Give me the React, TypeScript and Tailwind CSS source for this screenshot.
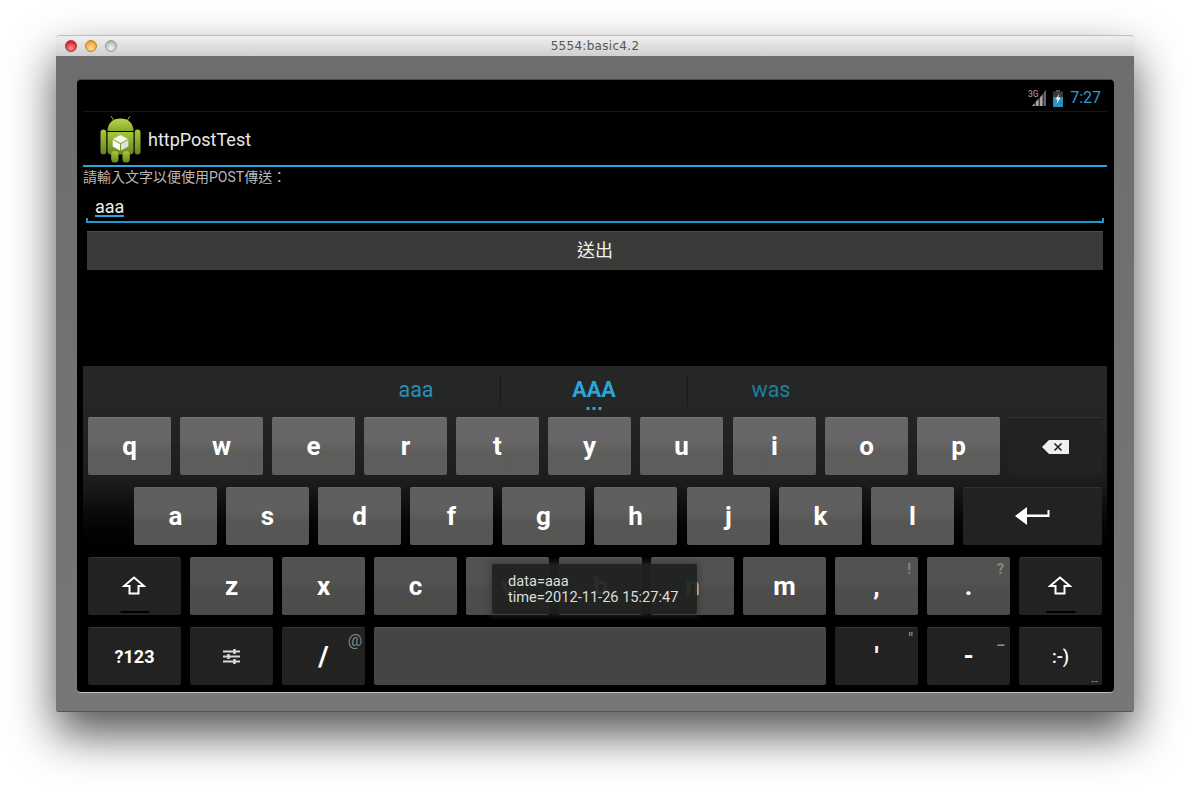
import React from "react";

const roboto = "font-['Roboto','Liberation_Sans',sans-serif]";

const tones = {
  r1: "bg-linear-to-b from-[#686668] from-40% to-[#5d5e5c] to-60% border-t border-[#757575]",
  r2: "bg-linear-to-b from-[#5f5f5f] from-40% to-[#565755] to-60% border-t border-[#686868]",
  r3: "bg-linear-to-b from-[#525350] from-40% to-[#4c4c4b] to-60% border-t border-[#5a5a58]",
  space: "bg-[#444644] border-t border-[#555]",
  dark: "bg-[#222222] border-t border-[#333333]",
};

function Key({
  label, tone, w = "w-[83px]", gap = false, hint, size = "text-[26px]", weight = "font-bold", children,
}: {
  label?: string; tone: keyof typeof tones; w?: string; gap?: boolean; hint?: React.ReactNode;
  size?: string; weight?: string; children?: React.ReactNode;
}) {
  return (
    <div className={`relative h-[58px] rounded-[2px] shrink-0 flex items-center justify-center text-white ${w} ${tones[tone]} ${gap ? "ml-px" : ""} ${size} ${weight}`}>
      {label}
      {children}
      {hint}
    </div>
  );
}

function Shift() {
  return (
    <>
      <svg width="24" height="19" viewBox="0 0 24 19" fill="none" className="-mt-[2px] -ml-[1px]">
        <path d="M12 1.5 L22 10 H16.5 V17.5 H7.5 V10 H2 Z" stroke="#fff" strokeWidth="2" strokeLinejoin="miter" />
      </svg>
      <div className="absolute bottom-[2px] left-1/2 -translate-x-1/2 w-[29px] h-[2px] bg-black" />
    </>
  );
}

function Android() {
  return (
    <svg width="41" height="48" viewBox="0 0 41 48" className="shrink-0">
      <defs>
        <linearGradient id="g" x1="0" y1="0" x2="0" y2="1">
          <stop offset="0" stopColor="#a9c83e" />
          <stop offset="1" stopColor="#67851c" />
        </linearGradient>
        <linearGradient id="h" x1="0" y1="0" x2="0" y2="1">
          <stop offset="0" stopColor="#b6d64c" />
          <stop offset="1" stopColor="#8aa92c" />
        </linearGradient>
      </defs>
      <path d="M11 1 L13.5 5 M30 1 L27.5 5" stroke="#8fae30" strokeWidth="1" />
      <path d="M7.5 16 C7.5 8 13 3.5 20.5 3.5 C28 3.5 33.5 8 33.5 16 Z" fill="url(#h)" />
      <path d="M7.5 17 H33.5 V36 Q33.5 39.5 30 39.5 H11 Q7.5 39.5 7.5 36 Z" fill="url(#g)" />
      <rect x="0.5" y="14.5" width="5.8" height="25" rx="2.9" fill="url(#g)" />
      <rect x="34.7" y="14.5" width="5.8" height="25" rx="2.9" fill="url(#g)" />
      <rect x="11.2" y="36" width="7.3" height="11.5" rx="3.6" fill="url(#g)" />
      <rect x="22.5" y="36" width="7.3" height="11.5" rx="3.6" fill="url(#g)" />
      <path d="M20.5 20 L28 24 L20.5 28 L13 24 Z" fill="#f6f6f2" />
      <path d="M12.7 25 L20 29 V35.5 L12.7 31.5 Z" fill="#fff" />
      <path d="M28.3 25 L21 29 V35.5 L28.3 31.5 Z" fill="#dfe2d8" />
    </svg>
  );
}

function Hint({ children, className }: { children: React.ReactNode; className: string }) {
  return <span className={`absolute text-[#858585] leading-none ${className}`}>{children}</span>;
}

export default function App() {
  const r1 = ["q", "w", "e", "r", "t", "y", "u", "i", "o", "p"];
  const r2 = ["a", "s", "d", "f", "g", "h", "j", "k", "l"];
  const r3 = ["z", "x", "c", "v", "b", "n", "m"];
  return (
    <div className={`w-[1190px] h-[790px] bg-white pl-[56px] pt-[35px] overflow-hidden ${roboto}`}>
      <div className="w-[1078px] h-[677px] rounded-t-[4px] rounded-b-[2px] flex flex-col shadow-[0_22px_46px_rgba(0,0,0,0.68)] border-b border-[#555]">
        <div className="h-[21px] shrink-0 rounded-t-[4px] border-t border-[#bdbdbd] bg-linear-to-b from-[#f0f0f0] to-[#cfcfcf] flex items-center px-[9px] relative">
          <div className="flex gap-[8px]">
            <div className="w-[12px] h-[12px] rounded-full border border-[#a33] bg-[radial-gradient(circle_at_50%_70%,#ff9a9a,#e5262a_65%,#b81c1c)]" />
            <div className="w-[12px] h-[12px] rounded-full border border-[#b8862f] bg-[radial-gradient(circle_at_50%_70%,#ffe0a0,#f3a63a_65%,#c98820)]" />
            <div className="w-[12px] h-[12px] rounded-full border border-[#999] bg-[radial-gradient(circle_at_50%_70%,#f4f4f4,#bdbdbd_65%,#a0a0a0)]" />
          </div>
          <div className="absolute left-0 right-0 top-[2px] text-center text-[12px] leading-[16px] tracking-[0.3px] text-[#555] font-['DejaVu_Sans',sans-serif]">5554:basic4.2</div>
        </div>
        <div className="flex-1 bg-linear-to-b from-[#6d6d6d] to-[#777777] pt-[24px] pl-[21px]">
          <div className="relative w-[1037px] h-[613px] bg-black rounded-[4px] pl-[6px] pr-[7px] flex flex-col border-b border-[#c4c4c4] shadow-[0_-1px_0_#4a4a4a]">
            <div className="h-[32px] shrink-0 border-b border-[#161616] flex items-center justify-end pr-[6px] pt-[5px] gap-[7px]">
              <svg width="18" height="17" viewBox="0 0 18 17">
                <text x="0" y="7" fontSize="8.5" fontWeight="500" fill="#8c8c8c" fontFamily="Roboto, sans-serif">3G</text>
                <path d="M18 0 V16 H4 Z" fill="#3a3a3a" />
                <path d="M4 16 L6.5 13.3 V16 Z M8 16 V11.6 L10.5 9 V16 Z M12 16 V7.4 L14.5 4.7 V16 Z" fill="#a8a8a8" />
                <path d="M16 16 V2.5 L18 0 V16 Z" fill="#666" />
              </svg>
              <svg width="10" height="17" viewBox="0 0 10 17">
                <rect x="3" y="0" width="4" height="2" fill="#555" />
                <rect x="0" y="1.5" width="10" height="15.5" fill="#3a3a3a" />
                <rect x="0" y="7" width="10" height="10" fill="#2a8fc0" />
                <path d="M6.5 3.5 L2.5 9.5 H4.8 L3.5 14 L7.5 7.8 H5.2 Z" fill="#fff" />
              </svg>
              <span className="text-[16px] leading-none text-[#2a9fd6]">7:27</span>
            </div>
            <div className="h-[53px] shrink-0 border-b-2 border-[#2aa6dc] flex items-center pl-[17px] gap-[7px] box-content -mb-px">
              <Android />
              <span className="text-[18px] text-[#e8e8e8] pt-[2px]">httpPostTest</span>
            </div>
            <div className="mt-[1px] h-[20px] flex items-center text-[14px] text-[#b8b8b8] font-['Roboto','Noto_Sans_CJK_TC',sans-serif]">請輸入文字以便使用POST傳送：</div>
            <div className="mx-[3px] h-[37px] -mt-[1px] relative">
              <div className="absolute left-[9px] top-[9px] text-[18px] leading-[24px] text-[#eeeeee] border-b-2 border-[#2aa6dc] h-[22px]">aaa</div>
              <div className="absolute left-0 right-0 bottom-0 h-[5px] border-x-2 border-b-2 border-[#1e98cc]" />
            </div>
            <div className="mx-[4px] mt-[8px] h-[39px] pb-[1px] bg-[#3a3b39] border-t border-[#4c4c4a] flex items-center justify-center text-[18px] text-[#f0f0f0] font-['Roboto','Noto_Sans_CJK_TC',sans-serif]">送出</div>
            <div className="mt-auto h-[326px] shrink-0 bg-linear-to-b from-[#252726] from-10% via-[#1c1e1d] via-35% to-black to-62% pl-[5px] flex flex-col gap-[12px]">
              <div className="h-[39px] -ml-[5px] pt-[9px] flex items-center shrink-0">
                <div className="ml-[246px] pl-[3px] w-[171px] text-center text-[21.5px] text-[#2b8fb8]">aaa</div>
                <div className="w-px h-[31px] bg-[#191a19]" />
                <div className="w-[186px] text-center text-[21.5px] font-bold text-[#2aa6dc] relative">
                  AAA
                  <div className="absolute left-1/2 -translate-x-1/2 -bottom-[4px] flex gap-[3px]">
                    <div className="w-[3px] h-[3px] bg-[#2aa6dc]" />
                    <div className="w-[3px] h-[3px] bg-[#2aa6dc]" />
                    <div className="w-[3px] h-[3px] bg-[#2aa6dc]" />
                  </div>
                </div>
                <div className="w-px h-[31px] bg-[#191a19]" />
                <div className="w-[166px] text-center text-[21.5px] text-[#1f7f9f]">was</div>
              </div>
              <div className="flex gap-[9px]">
                {r1.map((k) => <Key key={k} label={k} tone="r1" gap={k === "i"} />)}
                <Key tone="dark" w="w-[93px]">
                  <svg width="28" height="14" viewBox="0 0 28 14">
                    <path d="M7 0 H27 V14 H7 L0 7 Z" fill="#f0f0f0" />
                    <path d="M12.5 3.5 L19.5 10.5 M19.5 3.5 L12.5 10.5" stroke="#222" strokeWidth="1.6" />
                  </svg>
                </Key>
              </div>
              <div className="flex gap-[9px] pl-[46px]">
                {r2.map((k) => <Key key={k} label={k} tone="r2" gap={k === "j"} />)}
                <Key tone="dark" w="w-[139px]">
                  <svg width="35" height="18" viewBox="0 0 35 18" className="-mt-[1px]">
                    <path d="M0 9 L12 0 V7.5 H32.5 V3 H34.5 V10 H12 V18 Z" fill="#fff" />
                  </svg>
                </Key>
              </div>
              <div className="flex gap-[9px]">
                <Key tone="dark" w="w-[93px]"><Shift /></Key>
                {r3.map((k) => <Key key={k} label={k} tone="r3" gap={k === "b"} />)}
                <Key label="," tone="r3" hint={<Hint className="right-[7px] top-[4px] text-[14px] font-bold">!</Hint>} />
                <Key label="." tone="r3" hint={<Hint className="right-[6px] top-[4px] text-[14px] font-bold">?</Hint>} />
                <Key tone="dark"><Shift /></Key>
              </div>
              <div className="flex gap-[9px]">
                <Key label="?123" tone="dark" w="w-[93px]" size="text-[18px]" />
                <Key tone="dark">
                  <svg width="17" height="15" viewBox="0 0 17 15" fill="none" stroke="#d8d8d8" strokeWidth="2">
                    <path d="M0 2.5 H17 M0 7.5 H17 M0 12.5 H17" />
                    <path d="M11.5 0 V5 M5.5 5 V10 M11.5 10 V15" strokeWidth="2.5" />
                  </svg>
                </Key>
                <Key label="/" tone="dark" size="text-[28px]" hint={<Hint className="right-[3px] top-[5px] text-[16px] font-normal">@</Hint>} />
                <Key tone="space" w="w-[452px]" />
                <Key label="'" tone="dark" hint={<Hint className="right-[5px] top-[3px] text-[14px] font-bold">"</Hint>} />
                <Key label="-" tone="dark" hint={<Hint className="right-[5px] top-[10px] text-[14px] font-bold">–</Hint>} />
                <Key label=":-)" tone="dark" size="text-[18px]" weight="font-medium" hint={<Hint className="right-[4px] bottom-[-1px] text-[9px] font-bold">--</Hint>} />
              </div>
            </div>
            <div className="absolute left-[415px] top-[484px] w-[205px] h-[50px] rounded-[2px] bg-[#202220]/95 shadow-[0_0_5px_3px_rgba(50,54,50,0.5)] pl-[16px] pt-[9px] text-[14.6px] leading-[16px] text-[#dddddd]">
              <div>data=aaa</div>
              <div>time=2012-11-26 15:27:47</div>
            </div>
          </div>
        </div>
      </div>
    </div>
  );
}
